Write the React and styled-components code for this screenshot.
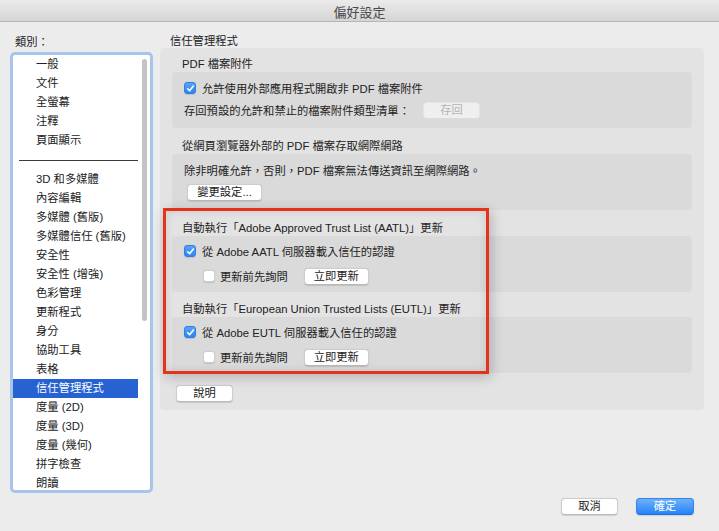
import React from 'react';
import styled, { createGlobalStyle } from 'styled-components';

const GlobalStyle = createGlobalStyle`
  html, body {
    margin: 0;
    padding: 0;
    background: #ececec;
  }
  body {
    font-family: "Liberation Sans", "Noto Sans CJK TC", sans-serif;
    font-size: 11.3px;
    color: #222;
  }
  * { box-sizing: border-box; }
`;

const Window = styled.div`
  width: 719px;
  height: 531px;
  display: flex;
  flex-direction: column;
  overflow: hidden;
  background: #ececec;
`;

const TitleBar = styled.div`
  height: 22px;
  flex-shrink: 0;
  display: flex;
  align-items: center;
  justify-content: center;
  background: linear-gradient(#ebebeb, #d5d5d5);
  border-bottom: 1px solid #b5b5b5;
  font-size: 13px;
  color: #4a4a4a;
  padding-top: 1px;
`;

const Main = styled.div`
  flex: 1;
  display: flex;
  min-height: 0;
`;

const Sidebar = styled.div`
  width: 150px;
  padding: 12px 0 0 13px;
  display: flex;
  flex-direction: column;
`;

const SideLabel = styled.div`
  line-height: 16px;
  margin-left: 2px;
`;

const List = styled.div`
  position: relative;
  margin-top: 5px;
  width: 137px;
  height: 435px;
  background: #fff;
  border-radius: 2px;
  box-shadow: 0 0 0 3px #a7c4ec;
  overflow: hidden;
`;

const Item = styled.div`
  height: 19px;
  line-height: 19px;
  padding-left: 23px;
  margin-right: 12px;
  white-space: nowrap;
  color: ${p => (p.$selected ? '#fff' : '#222')};
  background: ${p => (p.$selected ? '#2662d1' : 'transparent')};
`;

const Separator = styled.div`
  height: 20px;
  display: flex;
  align-items: center;
  padding: 0 12px 0 6px;

  &::after {
    content: '';
    flex: 1;
    height: 1px;
    background: #3a3a3a;
  }
`;

const ScrollThumb = styled.div`
  position: absolute;
  right: 3px;
  top: 4px;
  width: 5px;
  height: 262px;
  border-radius: 3px;
  background: #c3c3c3;
`;

const Content = styled.div`
  width: 544px;
  margin-left: 10px;
  padding-top: 12px;
`;

const Heading = styled.div`
  line-height: 14px;
  padding-left: 10px;
`;

const Panel = styled.div`
  position: relative;
  background: #e3e3e3;
  border-radius: 4px;
  padding: 9px 12px 8px;
`;

const Section = styled.div`
  margin-top: ${p => p.$top || 0}px;
`;

const SectionLabel = styled.div`
  line-height: 15px;
  padding-left: 10px;
  white-space: nowrap;
`;

const Group = styled.div`
  background: #dadada;
  border-radius: 4px;
  padding: ${p => p.$pt}px 12px ${p => p.$pb}px;
  display: flex;
  flex-direction: column;
  gap: ${p => p.$gap}px;
`;

const Row = styled.div`
  height: 18px;
  display: flex;
  align-items: center;
  padding-left: ${p => p.$indent || 0}px;
  white-space: nowrap;
`;

const Box = styled.span`
  width: 12px;
  height: 12px;
  flex-shrink: 0;
  margin-right: ${p => (p.$checked ? 6 : 5)}px;
  border-radius: 3px;
  display: flex;
  align-items: center;
  justify-content: center;
  background: ${p => (p.$checked ? 'linear-gradient(#59a2f7, #2d84f3)' : '#fff')};
  border: 1px solid ${p => (p.$checked ? '#2f7de0' : '#cfcfcf')};
  box-shadow: 0 0.5px 1px rgba(0, 0, 0, 0.12);
`;

const Button = styled.button`
  height: 17px;
  width: ${p => p.$w}px;
  margin-left: ${p => p.$ml || 0}px;
  padding: 0;
  font: inherit;
  line-height: 15px;
  border-radius: 4px;
  color: ${p => (p.$primary ? '#fff' : p.$disabled ? '#b4b4b4' : '#222')};
  background: ${p =>
    p.$primary
      ? 'linear-gradient(#6cb1fa, #2583f7)'
      : p.$disabled
      ? '#efefef'
      : '#fff'};
  border: 1px solid ${p => (p.$primary ? '#3583ea' : p.$disabled ? '#e3e3e3' : '#cdcdcd')};
  border-bottom-color: ${p => (p.$primary ? '#1f6fd9' : p.$disabled ? '#dcdcdc' : '#b9b9b9')};
  box-shadow: ${p => (p.$disabled ? 'none' : '0 0.5px 1px rgba(0, 0, 0, 0.12)')};
`;

const HelpRow = styled.div`
  margin-top: 12px;
  display: flex;
`;

const Highlight = styled.div`
  position: absolute;
  left: 3px;
  top: 160px;
  width: 326px;
  height: 166px;
  border: 3px solid #e6321d;
  pointer-events: none;
  box-shadow: 2px 3px 12px rgba(0, 0, 0, 0.22), inset 0 0 8px rgba(0, 0, 0, 0.12);
`;

const Footer = styled.div`
  height: 38px;
  flex-shrink: 0;
  display: flex;
  justify-content: flex-end;
  gap: 18px;
  padding: 5px 25px 0 0;
`;

const Check = ({ checked }) => (
  <Box $checked={checked}>
    {checked && (
      <svg width="9" height="9" viewBox="0 0 9 9">
        <path d="M1.6 4.8 L3.6 6.8 L7.4 2" fill="none" stroke="#fff" strokeWidth="1.6" strokeLinecap="round" strokeLinejoin="round" />
      </svg>
    )}
  </Box>
);

const topItems = ['一般', '文件', '全螢幕', '注釋', '頁面顯示'];
const moreItems = [
  '3D 和多媒體',
  '內容編輯',
  '多媒體 (舊版)',
  '多媒體信任 (舊版)',
  '安全性',
  '安全性 (增強)',
  '色彩管理',
  '更新程式',
  '身分',
  '協助工具',
  '表格',
  '信任管理程式',
  '度量 (2D)',
  '度量 (3D)',
  '度量 (幾何)',
  '拼字檢查',
  '朗讀',
];

export default function App() {
  return (
    <Window>
      <GlobalStyle />
      <TitleBar>偏好設定</TitleBar>
      <Main>
        <Sidebar>
          <SideLabel>類別：</SideLabel>
          <List>
            {topItems.map(t => (
              <Item key={t}>{t}</Item>
            ))}
            <Separator />
            {moreItems.map(t => (
              <Item key={t} $selected={t === '信任管理程式'}>
                {t}
              </Item>
            ))}
            <ScrollThumb />
          </List>
        </Sidebar>

        <Content>
          <Heading>信任管理程式</Heading>
          <Panel>
            <Section>
              <SectionLabel>PDF 檔案附件</SectionLabel>
              <Group $pt={7} $pb={9} $gap={4}>
                <Row>
                  <Check checked />
                  允許使用外部應用程式開啟非 PDF 檔案附件
                </Row>
                <Row>
                  存回預設的允許和禁止的檔案附件類型清單：
                  <Button $w={57} $ml={13} $disabled>存回</Button>
                </Row>
              </Group>
            </Section>

            <Section $top={11}>
              <SectionLabel>從網頁瀏覽器外部的 PDF 檔案存取網際網路</SectionLabel>
              <Group $pt={7} $pb={9} $gap={4}>
                <Row>除非明確允許，否則，PDF 檔案無法傳送資訊至網際網路。</Row>
                <Row>
                  <Button $w={75} $ml={3}>變更設定...</Button>
                </Row>
              </Group>
            </Section>

            <Section $top={11}>
              <SectionLabel>自動執行「Adobe Approved Trust List (AATL)」更新</SectionLabel>
              <Group $pt={6} $pb={7} $gap={7}>
                <Row>
                  <Check checked />
                  從 Adobe AATL 伺服器載入信任的認證
                </Row>
                <Row $indent={19}>
                  <Check />
                  更新前先詢問
                  <Button $w={65} $ml={16}>立即更新</Button>
                </Row>
              </Group>
            </Section>

            <Section $top={10}>
              <SectionLabel>自動執行「European Union Trusted Lists (EUTL)」更新</SectionLabel>
              <Group $pt={6} $pb={7} $gap={7}>
                <Row>
                  <Check checked />
                  從 Adobe EUTL 伺服器載入信任的認證
                </Row>
                <Row $indent={19}>
                  <Check />
                  更新前先詢問
                  <Button $w={65} $ml={16}>立即更新</Button>
                </Row>
              </Group>
            </Section>

            <HelpRow>
              <Button $w={57} $ml={4}>說明</Button>
            </HelpRow>

            <Highlight />
          </Panel>
        </Content>
      </Main>
      <Footer>
        <Button $w={57}>取消</Button>
        <Button $w={58} $primary>確定</Button>
      </Footer>
    </Window>
  );
}
